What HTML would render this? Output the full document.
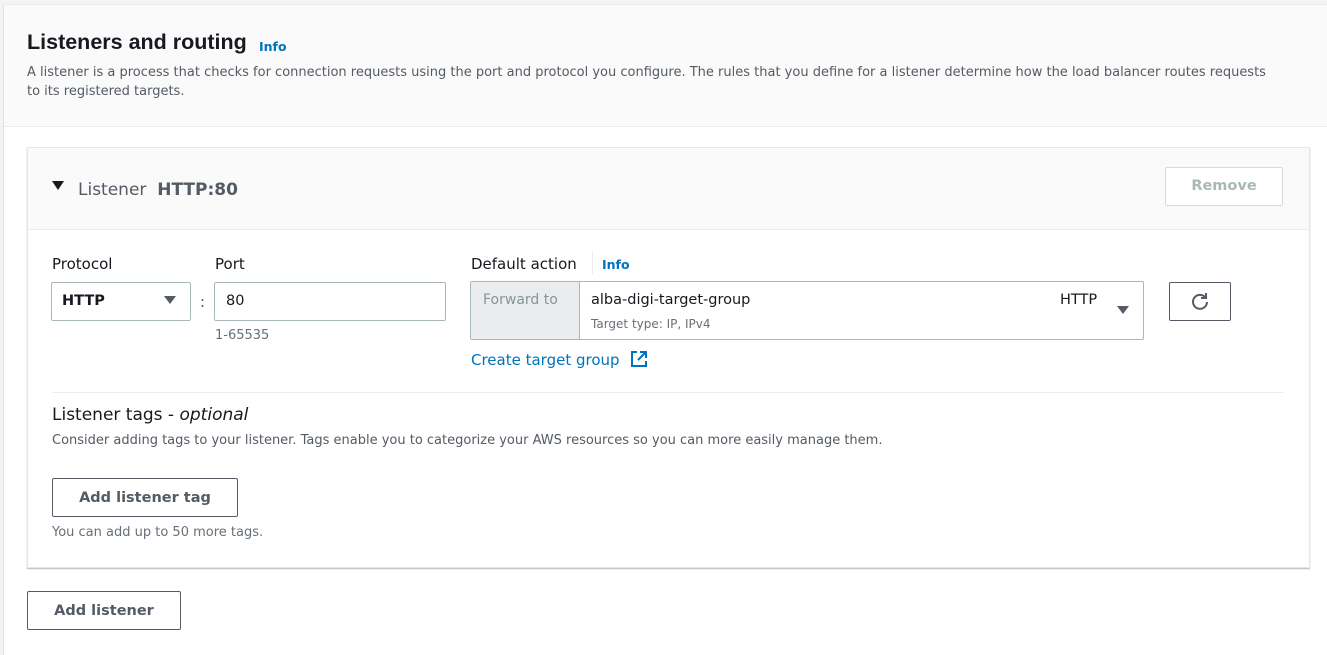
<!DOCTYPE html>
<html><head><style>
*{box-sizing:border-box;margin:0;padding:0}
body{width:1327px;height:655px;background:#f2f3f3;font-family:"DejaVu Sans","Liberation Sans",sans-serif;color:#16191f;position:relative;overflow:hidden}
.a{position:absolute;white-space:nowrap}
.panel{left:3px;top:4px;width:1330px;height:651px;background:#fff;border-left:1px solid #e1e4e4;border-top:1px solid #eaeded}
.ph{left:0;top:0;width:100%;height:122px;background:#fafafa;border-bottom:1px solid #eaeded}
.card{left:27px;top:147px;width:1283px;height:421px;background:#fff;border:1px solid #e5e8e8;box-shadow:0 1px 1px rgba(0,28,36,.3)}
.ch{left:0;top:0;width:100%;height:82px;background:#fafafa;border-bottom:1px solid #eaeded}
.lbl{font-size:15px;color:#16191f}
.info{font-size:12px;font-weight:bold;color:#0073bb}
.box{border:1px solid #aab7b8;border-radius:2px;background:#fff}
.btn{border:1px solid #545b64;border-radius:2px;background:#fff;font-weight:bold;font-size:14.5px;color:#545b64;text-align:center}
.small{font-size:13px;color:#687078}
.tri{width:0;height:0;border-left:6px solid transparent;border-right:6px solid transparent;border-top:8px solid #545b64}
</style></head><body>
<div class="a panel">
 <div class="a ph"></div>
</div>
<div class="a" style="left:27px;top:30px;font-size:21.5px;font-weight:bold;font-family:'Liberation Sans',sans-serif">Listeners and routing</div>
<div class="a info" style="left:259px;top:39px;font-size:12.5px">Info</div>
<div class="a" style="left:27px;top:63px;font-size:13px;color:#545b64;line-height:19px;width:1250px;white-space:normal">A listener is a process that checks for connection requests using the port and protocol you configure. The rules that you define for a listener determine how the load balancer routes requests to its registered targets.</div>

<div class="a card">
 <div class="a ch"></div>
</div>
<div class="a" style="left:52px;top:181px;width:0;height:0;border-left:6px solid transparent;border-right:6px solid transparent;border-top:9px solid #16191f"></div>
<div class="a" style="left:78px;top:180px;font-size:17px;color:#545b64">Listener&nbsp; <b style="color:#545b64">HTTP:80</b></div>
<div class="a" style="left:1165px;top:167px;width:118px;height:39px;border:1px solid #d5dbdb;border-radius:2px;background:#fff;color:#aab7b8;font-weight:bold;font-size:14.5px;text-align:center;line-height:37px">Remove</div>

<div class="a lbl" style="left:52px;top:255px">Protocol</div>
<div class="a lbl" style="left:215px;top:255px">Port</div>
<div class="a box" style="left:51px;top:282px;width:140px;height:39px"></div>
<div class="a" style="left:62px;top:293px;font-size:14.5px;font-weight:bold;color:#16191f">HTTP</div>
<div class="a tri" style="left:164px;top:296px"></div>
<div class="a" style="left:200px;top:293px;font-size:15px;color:#545b64">:</div>
<div class="a box" style="left:214px;top:282px;width:232px;height:39px"></div>
<div class="a" style="left:226px;top:293px;font-size:14.5px">80</div>
<div class="a small" style="left:215px;top:328px">1-65535</div>

<div class="a lbl" style="left:471px;top:255px">Default action</div>
<div class="a" style="left:592px;top:252px;width:1px;height:22px;background:#eaeded"></div>
<div class="a info" style="left:602px;top:257px;font-size:12.5px">Info</div>
<div class="a" style="left:470px;top:281px;width:674px;height:59px;border:1px solid #aab7b8;border-radius:2px;background:#fff"></div>
<div class="a" style="left:471px;top:282px;width:109px;height:57px;background:#eaeded;border-right:1px solid #aab7b8"></div>
<div class="a" style="left:483px;top:292px;font-size:14px;color:#879596">Forward to</div>
<div class="a" style="left:591px;top:292px;font-size:14.5px">alba-digi-target-group</div>
<div class="a" style="left:591px;top:317px;font-size:12px;color:#687078">Target type: IP, IPv4</div>
<div class="a" style="left:1060px;top:292px;font-size:14.5px">HTTP</div>
<div class="a tri" style="left:1117px;top:306px"></div>
<div class="a" style="left:1169px;top:282px;width:62px;height:39px;border:1px solid #545b64;border-radius:2px;background:#fff"></div>
<svg class="a" style="left:1189px;top:290px" width="22" height="22" viewBox="0 0 22 22"><path d="M16.5 7.5A7 7 0 1 0 18 12" fill="none" stroke="#545b64" stroke-width="2"/><path d="M17 3v5h-5" fill="none" stroke="#545b64" stroke-width="2"/></svg>
<div class="a" style="left:471px;top:351px;font-size:15px;color:#0073bb">Create target group</div>
<svg class="a" style="left:630px;top:350px" width="18" height="18" viewBox="0 0 18 18"><path d="M7 2H2v14h14v-5" fill="none" stroke="#0073bb" stroke-width="2"/><path d="M10 2h6v6M16 2L8 10" fill="none" stroke="#0073bb" stroke-width="2"/></svg>

<div class="a" style="left:52px;top:392px;width:1232px;height:1px;background:#eaeded"></div>
<div class="a" style="left:52px;top:405px;font-size:17px">Listener tags - <i>optional</i></div>
<div class="a" style="left:52px;top:433px;font-size:13px;color:#545b64">Consider adding tags to your listener. Tags enable you to categorize your AWS resources so you can more easily manage them.</div>
<div class="a btn" style="left:52px;top:478px;width:186px;height:39px;line-height:38px">Add listener tag</div>
<div class="a small" style="left:52px;top:525px">You can add up to 50 more tags.</div>

<div class="a btn" style="left:27px;top:591px;width:154px;height:39px;line-height:38px">Add listener</div>
</body></html>
